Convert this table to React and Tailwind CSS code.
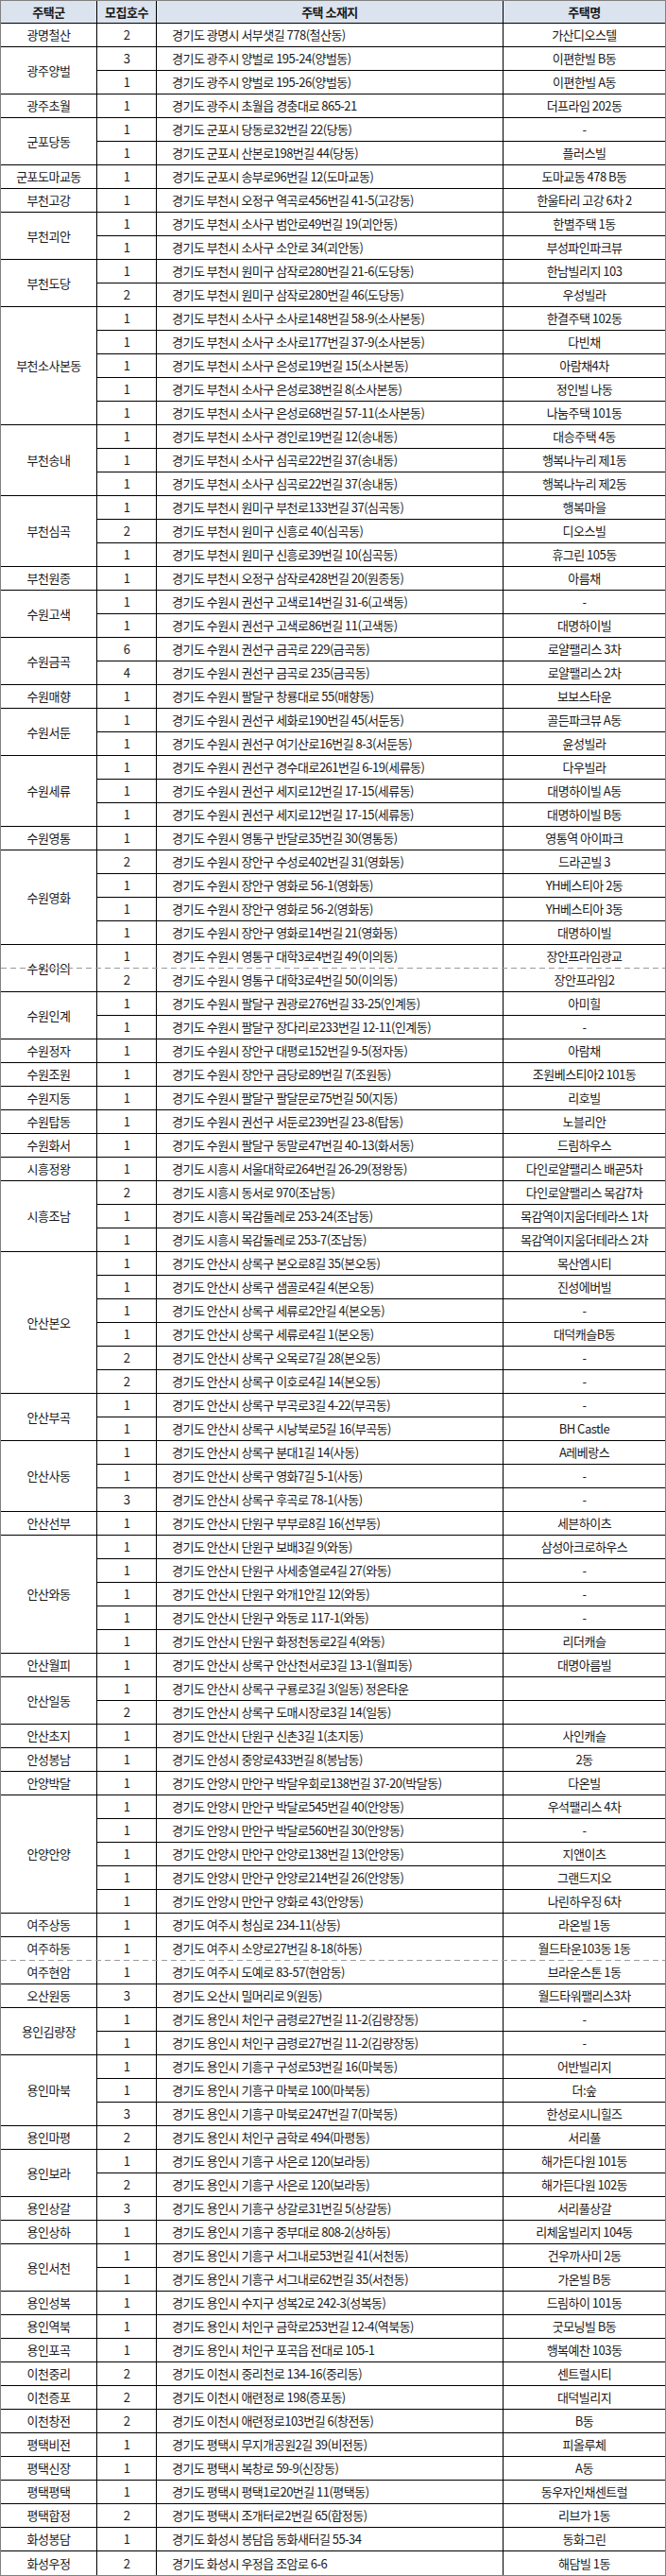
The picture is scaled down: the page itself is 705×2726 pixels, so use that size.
import React from "react";

const groups = [
  { name: "광명철산", rows: [["2", "경기도 광명시 서부샛길 778(철산동)", "가산디오스텔"]] },
  {
    name: "광주양벌",
    rows: [
      ["3", "경기도 광주시 양벌로 195-24(양벌동)", "이편한빌 B동"],
      ["1", "경기도 광주시 양벌로 195-26(양벌동)", "이편한빌 A동"],
    ],
  },
  { name: "광주초월", rows: [["1", "경기도 광주시 초월읍 경충대로 865-21", "더프라임 202동"]] },
  {
    name: "군포당동",
    rows: [
      ["1", "경기도 군포시 당동로32번길 22(당동)", "-"],
      ["1", "경기도 군포시 산본로198번길 44(당동)", "플러스빌"],
    ],
  },
  { name: "군포도마교동", rows: [["1", "경기도 군포시 송부로96번길 12(도마교동)", "도마교동 478 B동"]] },
  { name: "부천고강", rows: [["1", "경기도 부천시 오정구 역곡로456번길 41-5(고강동)", "한울타리 고강 6차 2"]] },
  {
    name: "부천괴안",
    rows: [
      ["1", "경기도 부천시 소사구 범안로49번길 19(괴안동)", "한별주택 1동"],
      ["1", "경기도 부천시 소사구 소안로 34(괴안동)", "부성파인파크뷰"],
    ],
  },
  {
    name: "부천도당",
    rows: [
      ["1", "경기도 부천시 원미구 삼작로280번길 21-6(도당동)", "한남빌리지 103"],
      ["2", "경기도 부천시 원미구 삼작로280번길 46(도당동)", "우성빌라"],
    ],
  },
  {
    name: "부천소사본동",
    rows: [
      ["1", "경기도 부천시 소사구 소사로148번길 58-9(소사본동)", "한결주택 102동"],
      ["1", "경기도 부천시 소사구 소사로177번길 37-9(소사본동)", "다빈채"],
      ["1", "경기도 부천시 소사구 은성로19번길 15(소사본동)", "아람채4차"],
      ["1", "경기도 부천시 소사구 은성로38번길 8(소사본동)", "정인빌 나동"],
      ["1", "경기도 부천시 소사구 은성로68번길 57-11(소사본동)", "나눔주택 101동"],
    ],
  },
  {
    name: "부천송내",
    rows: [
      ["1", "경기도 부천시 소사구 경인로19번길 12(송내동)", "대승주택 4동"],
      ["1", "경기도 부천시 소사구 심곡로22번길 37(송내동)", "행복나누리 제1동"],
      ["1", "경기도 부천시 소사구 심곡로22번길 37(송내동)", "행복나누리 제2동"],
    ],
  },
  {
    name: "부천심곡",
    rows: [
      ["1", "경기도 부천시 원미구 부천로133번길 37(심곡동)", "행복마을"],
      ["2", "경기도 부천시 원미구 신흥로 40(심곡동)", "디오스빌"],
      ["1", "경기도 부천시 원미구 신흥로39번길 10(심곡동)", "휴그린 105동"],
    ],
  },
  { name: "부천원종", rows: [["1", "경기도 부천시 오정구 삼작로428번길 20(원종동)", "아름채"]] },
  {
    name: "수원고색",
    rows: [
      ["1", "경기도 수원시 권선구 고색로14번길 31-6(고색동)", "-"],
      ["1", "경기도 수원시 권선구 고색로86번길 11(고색동)", "대명하이빌"],
    ],
  },
  {
    name: "수원금곡",
    rows: [
      ["6", "경기도 수원시 권선구 금곡로 229(금곡동)", "로얄팰리스 3차"],
      ["4", "경기도 수원시 권선구 금곡로 235(금곡동)", "로얄팰리스 2차"],
    ],
  },
  { name: "수원매향", rows: [["1", "경기도 수원시 팔달구 창룡대로 55(매향동)", "보보스타운"]] },
  {
    name: "수원서둔",
    rows: [
      ["1", "경기도 수원시 권선구 세화로190번길 45(서둔동)", "골든파크뷰 A동"],
      ["1", "경기도 수원시 권선구 여기산로16번길 8-3(서둔동)", "윤성빌라"],
    ],
  },
  {
    name: "수원세류",
    rows: [
      ["1", "경기도 수원시 권선구 경수대로261번길 6-19(세류동)", "다우빌라"],
      ["1", "경기도 수원시 권선구 세지로12번길 17-15(세류동)", "대명하이빌 A동"],
      ["1", "경기도 수원시 권선구 세지로12번길 17-15(세류동)", "대명하이빌 B동"],
    ],
  },
  { name: "수원영통", rows: [["1", "경기도 수원시 영통구 반달로35번길 30(영통동)", "영통역 아이파크"]] },
  {
    name: "수원영화",
    rows: [
      ["2", "경기도 수원시 장안구 수성로402번길 31(영화동)", "드라곤빌 3"],
      ["1", "경기도 수원시 장안구 영화로 56-1(영화동)", "YH베스티아 2동"],
      ["1", "경기도 수원시 장안구 영화로 56-2(영화동)", "YH베스티아 3동"],
      ["1", "경기도 수원시 장안구 영화로14번길 21(영화동)", "대명하이빌"],
    ],
  },
  {
    name: "수원이의",
    rows: [
      ["1", "경기도 수원시 영통구 대학3로4번길 49(이의동)", "장안프라임광교"],
      ["2", "경기도 수원시 영통구 대학3로4번길 50(이의동)", "장안프라임2"],
    ],
  },
  {
    name: "수원인계",
    rows: [
      ["1", "경기도 수원시 팔달구 권광로276번길 33-25(인계동)", "아미힐"],
      ["1", "경기도 수원시 팔달구 장다리로233번길 12-11(인계동)", "-"],
    ],
  },
  { name: "수원정자", rows: [["1", "경기도 수원시 장안구 대평로152번길 9-5(정자동)", "아람채"]] },
  { name: "수원조원", rows: [["1", "경기도 수원시 장안구 금당로89번길 7(조원동)", "조원베스티아2 101동"]] },
  { name: "수원지동", rows: [["1", "경기도 수원시 팔달구 팔달문로75번길 50(지동)", "리호빌"]] },
  { name: "수원탑동", rows: [["1", "경기도 수원시 권선구 서둔로239번길 23-8(탑동)", "노블리안"]] },
  { name: "수원화서", rows: [["1", "경기도 수원시 팔달구 동말로47번길 40-13(화서동)", "드림하우스"]] },
  { name: "시흥정왕", rows: [["1", "경기도 시흥시 서울대학로264번길 26-29(정왕동)", "다인로얄팰리스 배곧5차"]] },
  {
    name: "시흥조남",
    rows: [
      ["2", "경기도 시흥시 동서로 970(조남동)", "다인로얄팰리스 목감7차"],
      ["1", "경기도 시흥시 목감둘레로 253-24(조남동)", "목감역이지움더테라스 1차"],
      ["1", "경기도 시흥시 목감둘레로 253-7(조남동)", "목감역이지움더테라스 2차"],
    ],
  },
  {
    name: "안산본오",
    rows: [
      ["1", "경기도 안산시 상록구 본오로8길 35(본오동)", "목산엠시티"],
      ["1", "경기도 안산시 상록구 샘골로4길 4(본오동)", "진성에버빌"],
      ["1", "경기도 안산시 상록구 세류로2안길 4(본오동)", "-"],
      ["1", "경기도 안산시 상록구 세류로4길 1(본오동)", "대덕캐슬B동"],
      ["2", "경기도 안산시 상록구 오목로7길 28(본오동)", "-"],
      ["2", "경기도 안산시 상록구 이호로4길 14(본오동)", "-"],
    ],
  },
  {
    name: "안산부곡",
    rows: [
      ["1", "경기도 안산시 상록구 부곡로3길 4-22(부곡동)", "-"],
      ["1", "경기도 안산시 상록구 시낭북로5길 16(부곡동)", "BH Castle"],
    ],
  },
  {
    name: "안산사동",
    rows: [
      ["1", "경기도 안산시 상록구 분대1길 14(사동)", "A레베랑스"],
      ["1", "경기도 안산시 상록구 영화7길 5-1(사동)", "-"],
      ["3", "경기도 안산시 상록구 후곡로 78-1(사동)", "-"],
    ],
  },
  { name: "안산선부", rows: [["1", "경기도 안산시 단원구 부부로8길 16(선부동)", "세븐하이츠"]] },
  {
    name: "안산와동",
    rows: [
      ["1", "경기도 안산시 단원구 보배3길 9(와동)", "삼성아크로하우스"],
      ["1", "경기도 안산시 단원구 사세충열로4길 27(와동)", "-"],
      ["1", "경기도 안산시 단원구 와개1안길 12(와동)", "-"],
      ["1", "경기도 안산시 단원구 와동로 117-1(와동)", "-"],
      ["1", "경기도 안산시 단원구 화정천동로2길 4(와동)", "리더캐슬"],
    ],
  },
  { name: "안산월피", rows: [["1", "경기도 안산시 상록구 안산천서로3길 13-1(월피동)", "대명아름빌"]] },
  {
    name: "안산일동",
    rows: [
      ["1", "경기도 안산시 상록구 구룡로3길 3(일동) 정은타운", ""],
      ["2", "경기도 안산시 상록구 도매시장로3길 14(일동)", ""],
    ],
  },
  { name: "안산초지", rows: [["1", "경기도 안산시 단원구 신촌3길 1(초지동)", "사인캐슬"]] },
  { name: "안성봉남", rows: [["1", "경기도 안성시 중앙로433번길 8(봉남동)", "2동"]] },
  { name: "안양박달", rows: [["1", "경기도 안양시 만안구 박달우회로138번길 37-20(박달동)", "다온빌"]] },
  {
    name: "안양안양",
    rows: [
      ["1", "경기도 안양시 만안구 박달로545번길 40(안양동)", "우석팰리스 4차"],
      ["1", "경기도 안양시 만안구 박달로560번길 30(안양동)", "-"],
      ["1", "경기도 안양시 만안구 안양로138번길 13(안양동)", "지앤이츠"],
      ["1", "경기도 안양시 만안구 안양로214번길 26(안양동)", "그랜드지오"],
      ["1", "경기도 안양시 만안구 양화로 43(안양동)", "나린하우징 6차"],
    ],
  },
  { name: "여주상동", rows: [["1", "경기도 여주시 청심로 234-11(상동)", "라온빌 1동"]] },
  { name: "여주하동", rows: [["1", "경기도 여주시 소양로27번길 8-18(하동)", "월드타운103동 1동"]] },
  { name: "여주현암", rows: [["1", "경기도 여주시 도예로 83-57(현암동)", "브라운스톤 1동"]] },
  { name: "오산원동", rows: [["3", "경기도 오산시 밀머리로 9(원동)", "월드타워팰리스3차"]] },
  {
    name: "용인김량장",
    rows: [
      ["1", "경기도 용인시 처인구 금령로27번길 11-2(김량장동)", "-"],
      ["1", "경기도 용인시 처인구 금령로27번길 11-2(김량장동)", "-"],
    ],
  },
  {
    name: "용인마북",
    rows: [
      ["1", "경기도 용인시 기흥구 구성로53번길 16(마북동)", "어반빌리지"],
      ["1", "경기도 용인시 기흥구 마북로 100(마북동)", "더:숲"],
      ["3", "경기도 용인시 기흥구 마북로247번길 7(마북동)", "한성로시니힐즈"],
    ],
  },
  { name: "용인마평", rows: [["2", "경기도 용인시 처인구 금학로 494(마평동)", "서리풀"]] },
  {
    name: "용인보라",
    rows: [
      ["1", "경기도 용인시 기흥구 사은로 120(보라동)", "해가든다원 101동"],
      ["2", "경기도 용인시 기흥구 사은로 120(보라동)", "해가든다원 102동"],
    ],
  },
  { name: "용인상갈", rows: [["3", "경기도 용인시 기흥구 상갈로31번길 5(상갈동)", "서리풀상갈"]] },
  { name: "용인상하", rows: [["1", "경기도 용인시 기흥구 중부대로 808-2(상하동)", "리체움빌리지 104동"]] },
  {
    name: "용인서천",
    rows: [
      ["1", "경기도 용인시 기흥구 서그내로53번길 41(서천동)", "건우까사미 2동"],
      ["1", "경기도 용인시 기흥구 서그내로62번길 35(서천동)", "가온빌 B동"],
    ],
  },
  { name: "용인성복", rows: [["1", "경기도 용인시 수지구 성복2로 242-3(성복동)", "드림하이 101동"]] },
  { name: "용인역북", rows: [["1", "경기도 용인시 처인구 금학로253번길 12-4(역북동)", "굿모닝빌 B동"]] },
  { name: "용인포곡", rows: [["1", "경기도 용인시 처인구 포곡읍 전대로 105-1", "행복예찬 103동"]] },
  { name: "이천중리", rows: [["2", "경기도 이천시 중리천로 134-16(중리동)", "센트럴시티"]] },
  { name: "이천증포", rows: [["2", "경기도 이천시 애련정로 198(증포동)", "대덕빌리지"]] },
  { name: "이천창전", rows: [["2", "경기도 이천시 애련정로103번길 6(창전동)", "B동"]] },
  { name: "평택비전", rows: [["1", "경기도 평택시 무지개공원2길 39(비전동)", "피올루체"]] },
  { name: "평택신장", rows: [["1", "경기도 평택시 복창로 59-9(신장동)", "A동"]] },
  { name: "평택평택", rows: [["1", "경기도 평택시 평택1로20번길 11(평택동)", "동우자인채센트럴"]] },
  { name: "평택합정", rows: [["2", "경기도 평택시 조개터로2번길 65(합정동)", "리브가 1동"]] },
  { name: "화성봉담", rows: [["1", "경기도 화성시 봉담읍 동화새터길 55-34", "동화그린"]] },
  { name: "화성우정", rows: [["2", "경기도 화성시 우정읍 조암로 6-6", "해담빌 1동"]] },
];

// page-break marks that Excel leaves on the sheet
const dash = "h-px w-full bg-[repeating-linear-gradient(to_right,#9a9a9a_0_6px,#ffffff_6px_10px)]";

export default function App() {
  const total = groups.reduce((n, g) => n + g.rows.length, 0);
  let idx = 0;

  return (
    <div className="bg-white w-[705px] font-['Noto_Sans_CJK_KR','Noto_Sans',sans-serif] text-[13px] tracking-[-0.04em] text-[#1a1a1a]">
      <div className="relative border border-[#808080]">
        <table className="w-full table-fixed border-separate border-spacing-0">
          <colgroup>
            <col className="w-[102px]" />
            <col className="w-[63px]" />
            <col className="w-[367px]" />
            <col />
          </colgroup>
          <thead>
            <tr className="h-[24px] bg-[#dbe3ee] font-bold">
              <th className="border-r border-b border-black p-0 text-center">주택군</th>
              <th className="border-r border-b border-black p-0 text-center">모집호수</th>
              <th className="border-r border-b border-black p-0 text-center">주택 소재지</th>
              <th className="border-b border-black p-0 text-center">주택명</th>
            </tr>
          </thead>
          <tbody>
            {groups.map((g, gi) =>
              g.rows.map((r, ri) => {
                idx += 1;
                const last = idx === total;
                const lastOfGroup = ri === g.rows.length - 1;
                const b = last ? "" : "border-b";
                return (
                  <tr key={`${gi}-${ri}`} className="h-[25px]">
                    {ri === 0 && (
                      <td
                        rowSpan={g.rows.length}
                        className={`border-r border-black p-0 text-center ${lastOfGroup && last ? "" : "border-b"}`}
                      >
                        {g.name}
                      </td>
                    )}
                    <td className={`border-r border-black p-0 text-center ${b}`}>{r[0]}</td>
                    <td className={`border-r border-black py-0 pl-4 pr-1 text-left whitespace-nowrap ${b}`}>{r[1]}</td>
                    <td className={`border-black p-0 text-center whitespace-nowrap ${b}`}>{r[2]}</td>
                  </tr>
                );
              })
            )}
          </tbody>
        </table>

        <div className="absolute left-0 right-0 top-[1023px]">
          <div className={dash} />
        </div>
        <div className="absolute left-0 right-0 top-[2073px]">
          <div className={dash} />
        </div>
      </div>
    </div>
  );
}
